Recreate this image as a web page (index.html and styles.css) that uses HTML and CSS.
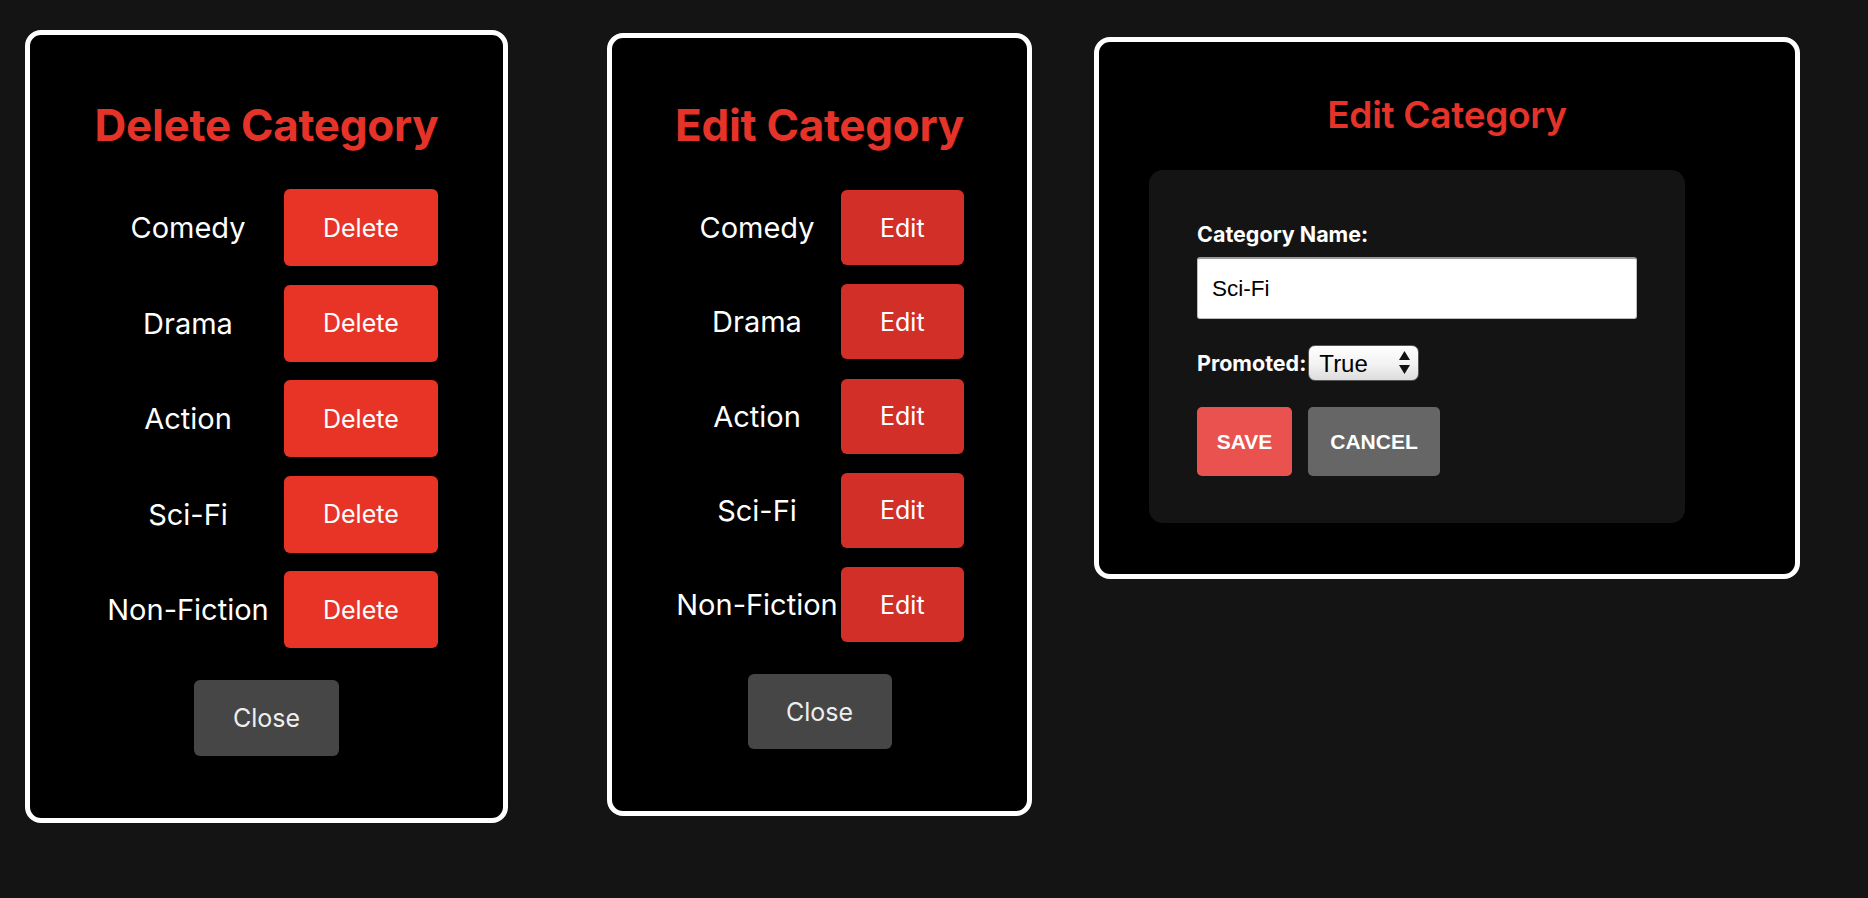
FILE: index.html
```html
<!DOCTYPE html>
<html lang="en">
<head>
<meta charset="utf-8">
<title>Categories</title>
<link rel="stylesheet" href="styles.css">
</head>
<body>
<div class="stage">
  <section class="panel panel-delete">
    <h2 class="title">Delete Category</h2>
    <div class="rows">
      <div class="row"><span class="label">Comedy</span><button class="btn btn-delete">Delete</button></div>
      <div class="row"><span class="label">Drama</span><button class="btn btn-delete">Delete</button></div>
      <div class="row"><span class="label">Action</span><button class="btn btn-delete">Delete</button></div>
      <div class="row"><span class="label">Sci-Fi</span><button class="btn btn-delete">Delete</button></div>
      <div class="row"><span class="label">Non-Fiction</span><button class="btn btn-delete">Delete</button></div>
    </div>
    <div class="close-wrap"><button class="btn btn-close">Close</button></div>
  </section>

  <section class="panel panel-edit">
    <h2 class="title">Edit Category</h2>
    <div class="rows">
      <div class="row"><span class="label">Comedy</span><button class="btn btn-edit">Edit</button></div>
      <div class="row"><span class="label">Drama</span><button class="btn btn-edit">Edit</button></div>
      <div class="row"><span class="label">Action</span><button class="btn btn-edit">Edit</button></div>
      <div class="row"><span class="label">Sci-Fi</span><button class="btn btn-edit">Edit</button></div>
      <div class="row"><span class="label">Non-Fiction</span><button class="btn btn-edit">Edit</button></div>
    </div>
    <div class="close-wrap"><button class="btn btn-close">Close</button></div>
  </section>

  <section class="panel panel-form">
    <h2 class="title title-small">Edit Category</h2>
    <form class="form-box">
      <label class="form-label" for="cat-name">Category Name:</label>
      <input class="text-input" id="cat-name" type="text" value="Sci-Fi">
      <div class="promo-row">
        <label class="form-label" for="promoted">Promoted:</label>
        <span class="select-wrap">
          <select class="select" id="promoted">
            <option>True</option>
            <option>False</option>
          </select>
          <svg class="select-arrows" width="11" height="23" viewBox="0 0 11 23"><path d="M5.5 0 L11 9 L0 9 Z M0 14 L11 14 L5.5 23 Z" fill="#111"/></svg>
        </span>
      </div>
      <div class="actions">
        <button type="button" class="fbtn fbtn-save">SAVE</button>
        <button type="button" class="fbtn fbtn-cancel">CANCEL</button>
      </div>
    </form>
  </section>
</div>
</body>
</html>
```

FILE: styles.css
```css
* { box-sizing: border-box; }

html, body {
  margin: 0;
  padding: 0;
  background: #141414;
}

body {
  font-family: Inter, "Noto Sans", "Liberation Sans", sans-serif;
  color: #fff;
}

.stage {
  display: flex;
  align-items: flex-start;
  padding-left: 25px;
}

.panel {
  flex: none;
  background: #000;
  border: 5px solid #fff;
  border-radius: 16px;
  display: flex;
  flex-direction: column;
}

.panel-delete {
  width: 483px;
  margin-top: 30px;
  padding: 64px 0 62px 0;
}

.panel-edit {
  width: 425px;
  margin-top: 33px;
  margin-left: 99px;
  padding: 61px 0 62px 0;
}

.panel-form {
  width: 706px;
  margin-top: 37px;
  margin-left: 62px;
  padding: 52px 0 51px 0;
}

.title {
  margin: 0;
  color: #e5332a;
  font-size: 44px;
  line-height: 52px;
  font-weight: 700;
  text-align: center;
  letter-spacing: -0.3px;
}

.title-small {
  font-size: 37px;
  line-height: 42px;
  font-weight: 600;
}

.rows {
  display: flex;
  flex-direction: column;
}

.panel-delete .rows {
  margin-top: 38px;
  padding-left: 75px;
  gap: 18.5px;
}

.panel-edit .rows {
  margin-top: 39px;
  padding-left: 62px;
  gap: 19.3px;
}

.row {
  display: flex;
  align-items: center;
}

.label {
  font-size: 29px;
  white-space: nowrap;
  text-align: center;
  color: #fff;
}

.panel-delete .label {
  width: 166px;
  margin-right: 13px;
}

.panel-edit .label {
  width: 166px;
  margin-right: 1px;
}

.btn {
  font-family: Inter, "Noto Sans", "Liberation Sans", sans-serif;
  font-size: 25px;
  color: #fff;
  border: none;
  border-radius: 6px;
  padding: 0 39px;
  cursor: pointer;
}

.btn-delete {
  background: #e83427;
  height: 77px;
}

.btn-edit {
  background: #d22f29;
  height: 75px;
}

.close-wrap {
  display: flex;
  justify-content: center;
  margin-top: 32px;
}

.btn-close {
  background: #464646;
  color: #eee;
  width: 145px;
  height: 76px;
  padding: 0;
}

.panel-edit .btn-close {
  width: 144px;
  height: 75px;
}

.form-box {
  margin: 34px 0 0 50px;
  width: 536px;
  background: #141414;
  border-radius: 14px;
  padding: 52px 48px 47px 48px;
  display: flex;
  flex-direction: column;
  align-items: flex-start;
}

.form-label {
  font-size: 21.5px;
  line-height: 24px;
  font-weight: 700;
  color: #fff;
}

.text-input {
  margin-top: 11px;
  width: 440px;
  height: 62px;
  background: #fff;
  border: 1px solid #bdbdbd;
  border-top: 2px solid #9a9a9a;
  border-radius: 3px;
  padding: 0 14px;
  font-family: "Liberation Sans", Arial, sans-serif;
  font-size: 22.5px;
  color: #000;
  outline: none;
}

.promo-row {
  margin-top: 26px;
  display: flex;
  align-items: center;
  gap: 2px;
}

.select-wrap {
  position: relative;
  display: inline-block;
}

.select {
  -webkit-appearance: none;
  appearance: none;
  width: 111px;
  height: 36px;
  border: 1px solid #555;
  border-radius: 7px;
  background: linear-gradient(#ffffff, #f2f2f2 55%, #dcdcdc);
  font-family: "Liberation Sans", Arial, sans-serif;
  font-size: 24px;
  color: #000;
  padding: 0 0 0 10px;
  display: block;
}

.select-arrows {
  position: absolute;
  right: 9px;
  top: 6px;
  pointer-events: none;
}

.actions {
  margin-top: 26px;
  display: flex;
  gap: 16px;
}

.fbtn {
  height: 69px;
  border: none;
  border-radius: 5px;
  color: #fff;
  font-family: "Liberation Sans", Arial, sans-serif;
  font-weight: 700;
  font-size: 21px;
  cursor: pointer;
}

.fbtn-save {
  width: 95px;
  background: #e9524f;
}

.fbtn-cancel {
  width: 132px;
  background: #666666;
}
```
